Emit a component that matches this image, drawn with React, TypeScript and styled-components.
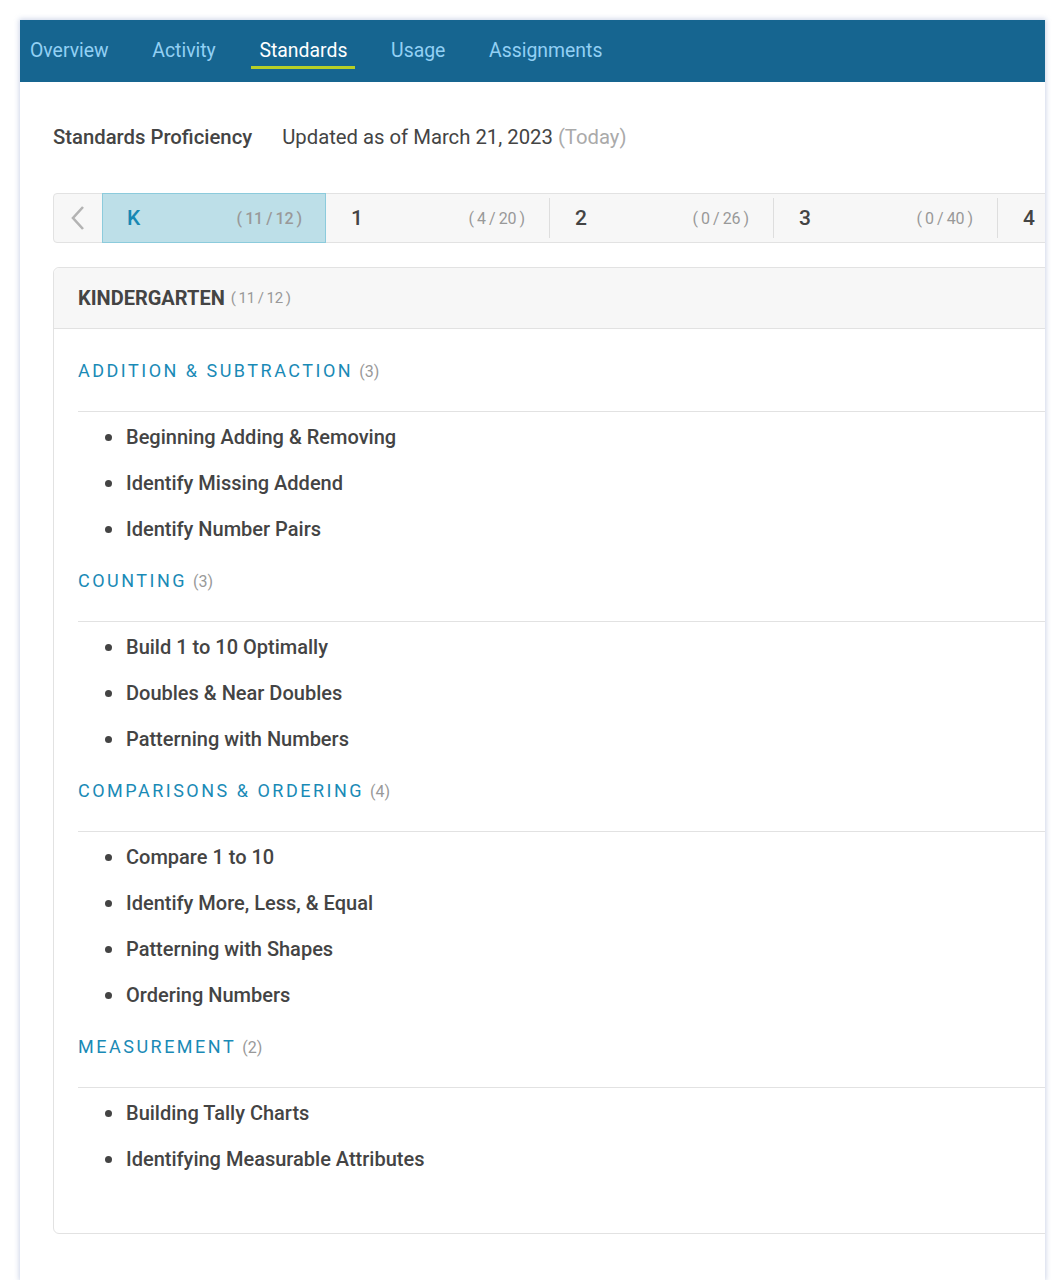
import React from "react";
import styled, { createGlobalStyle } from "styled-components";

const Global = createGlobalStyle`
  html, body { margin: 0; padding: 0; background: #ffffff; }
  body { font-family: Roboto, "Liberation Sans", Arial, sans-serif; color: #444; }
  * { box-sizing: border-box; }
`;

const Card = styled.div`
  margin: 20px 0 0 20px;
  width: 1025px;
  min-height: 1260px;
  background: #fff;
  overflow: hidden;
  box-shadow: 0 0 5px 1px rgba(190, 200, 225, 0.75);
`;

const Nav = styled.nav`
  height: 62px;
  background: #166590;
  display: flex;
  align-items: stretch;
  padding-left: 2px;
`;

const NavTab = styled.a<{ $active?: boolean }>`
  position: relative;
  display: flex;
  align-items: center;
  padding: 0 8px 2px;
  margin-right: 27.7px;
  font-size: 19.4px;
  color: ${(p) => (p.$active ? "#ffffff" : "#92d0f4")};
  text-decoration: none;
  cursor: pointer;
  &::after {
    content: "";
    display: ${(p) => (p.$active ? "block" : "none")};
    position: absolute;
    left: 0;
    right: 0;
    top: 46px;
    height: 3px;
    background: #b6cf26;
  }
`;

const Content = styled.div`
  padding: 0 0 40px 33px;
  width: 1300px;
`;

const TitleRow = styled.div`
  margin-top: 43px;
  display: flex;
  align-items: center;
  line-height: 24px;
  height: 24px;
  gap: 30px;
`;

const Title = styled.h2`
  margin: 0;
  font-size: 20.3px;
  font-weight: 500;
  color: #444;
`;

const Updated = styled.span`
  font-size: 20.3px;
  color: #444;
`;

const Muted = styled.span`
  color: #aaa;
`;

const GradeBar = styled.div`
  margin-top: 44px;
  display: flex;
  height: 50px;
  background: #f7f7f7;
  border: 1px solid #e2e2e2;
  border-radius: 4px;
`;

const PrevButton = styled.button`
  width: 48px;
  flex: none;
  border: none;
  background: transparent;
  display: flex;
  align-items: center;
  justify-content: center;
  padding: 0;
  cursor: pointer;
`;

const GradeCell = styled.div<{ $active?: boolean }>`
  width: 224px;
  flex: none;
  display: flex;
  align-items: center;
  justify-content: space-between;
  padding: 0 24px 0 25px;
  margin: ${(p) => (p.$active ? "-1px 0" : "4px 0")};
  border-right: ${(p) => (p.$active ? "none" : "1px solid #dedede")};
  background: ${(p) => (p.$active ? "#bddfe8" : "transparent")};
  outline: ${(p) => (p.$active ? "1px solid #8ccbdc" : "none")};
  outline-offset: -1px;
`;

const GradeLabel = styled.span<{ $active?: boolean }>`
  font-size: 21px;
  font-weight: 500;
  color: ${(p) => (p.$active ? "#1888b3" : "#444")};
`;

const GradeCount = styled.span<{ $active?: boolean }>`
  font-size: 16px;
  color: #999;
  font-weight: ${(p) => (p.$active ? 500 : 400)};
  letter-spacing: -0.2px;
  word-spacing: -0.5px;
`;

const Panel = styled.section`
  margin-top: 24px;
  border: 1px solid #e2e2e2;
  border-radius: 6px;
  background: #fff;
`;

const PanelHeader = styled.div`
  height: 61px;
  background: #f7f7f7;
  border-bottom: 1px solid #e2e2e2;
  border-radius: 6px 6px 0 0;
  display: flex;
  align-items: center;
  padding-left: 24px;
  gap: 6px;
`;

const PanelTitle = styled.span`
  font-size: 20px;
  font-weight: 700;
  color: #444;
`;

const PanelCount = styled.span`
  font-size: 15px;
  color: #999;
  letter-spacing: -0.3px;
  word-spacing: -0.5px;
`;

const PanelBody = styled.div`
  padding: 12px 0 52px 24px;
`;

const SectionHead = styled.h3`
  margin: 18px 0 0;
  height: 53px;
  padding-bottom: 28px;
  border-bottom: 1px solid #e2e2e2;
  line-height: 24px;
  font-weight: 400;
  display: flex;
  align-items: center;
  gap: 6px;
`;

const SectionName = styled.span`
  font-size: 18px;
  letter-spacing: 2.5px;
  color: #1a8ab6;
  line-height: 24px;
`;

const SectionCount = styled.span`
  font-size: 16px;
  color: #999;
  line-height: 24px;
  padding-top: 2px;
`;

const List = styled.ul`
  margin: 0;
  padding: 1px 0 0 48px;
  list-style: disc;
`;

const Item = styled.li`
  height: 46px;
  font-size: 20px;
  font-weight: 500;
  line-height: 46px;
  color: #444;
  &::marker {
    color: #444;
    font-size: 24px;
  }
`;

const sections = [
  {
    name: "ADDITION & SUBTRACTION",
    items: ["Beginning Adding & Removing", "Identify Missing Addend", "Identify Number Pairs"],
  },
  {
    name: "COUNTING",
    items: ["Build 1 to 10 Optimally", "Doubles & Near Doubles", "Patterning with Numbers"],
  },
  {
    name: "COMPARISONS & ORDERING",
    items: ["Compare 1 to 10", "Identify More, Less, & Equal", "Patterning with Shapes", "Ordering Numbers"],
  },
  {
    name: "MEASUREMENT",
    items: ["Building Tally Charts", "Identifying Measurable Attributes"],
  },
];

const grades = [
  { label: "K", count: "( 11 / 12 )", active: true },
  { label: "1", count: "( 4 / 20 )" },
  { label: "2", count: "( 0 / 26 )" },
  { label: "3", count: "( 0 / 40 )" },
  { label: "4", count: "( 0 / 40 )" },
];

export default function App() {
  return (
    <>
      <Global />
      <Card>
        <Nav>
          {["Overview", "Activity", "Standards", "Usage", "Assignments"].map((t) => (
            <NavTab key={t} $active={t === "Standards"}>
              {t}
            </NavTab>
          ))}
        </Nav>
        <Content>
          <TitleRow>
            <Title>Standards Proficiency</Title>
            <Updated>
              Updated as of March 21, 2023 <Muted>(Today)</Muted>
            </Updated>
          </TitleRow>
          <GradeBar>
            <PrevButton aria-label="Previous">
              <svg width="16" height="26" viewBox="0 0 16 26">
                <path d="M13 2 L3 13 L13 24" fill="none" stroke="#b3b3b3" strokeWidth="2.6" />
              </svg>
            </PrevButton>
            {grades.map((g) => (
              <GradeCell key={g.label} $active={g.active}>
                <GradeLabel $active={g.active}>{g.label}</GradeLabel>
                <GradeCount $active={g.active}>{g.count}</GradeCount>
              </GradeCell>
            ))}
          </GradeBar>
          <Panel>
            <PanelHeader>
              <PanelTitle>KINDERGARTEN</PanelTitle>
              <PanelCount>( 11 / 12 )</PanelCount>
            </PanelHeader>
            <PanelBody>
              {sections.map((s) => (
                <div key={s.name}>
                  <SectionHead>
                    <SectionName>{s.name}</SectionName>
                    <SectionCount>({s.items.length})</SectionCount>
                  </SectionHead>
                  <List>
                    {s.items.map((i) => (
                      <Item key={i}>{i}</Item>
                    ))}
                  </List>
                </div>
              ))}
            </PanelBody>
          </Panel>
        </Content>
      </Card>
    </>
  );
}
